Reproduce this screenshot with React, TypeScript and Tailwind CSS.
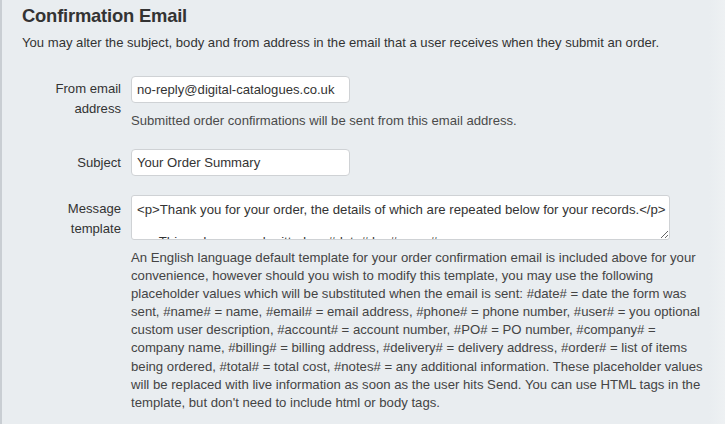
export default function App() {
  return (
    <div
      className="flex h-[424px] w-[725px] overflow-hidden bg-[#e9edf0] text-[#333]"
      style={{ fontFamily: '"Liberation Sans", Arial, sans-serif' }}
    >
      <div className="w-[2px] shrink-0 bg-[#c9ced3]" />
      <div className="flex-1 pt-[4px]">
        <div className="pl-[20px]">
          <h2 className="text-[18.4px] font-bold leading-[24px] tracking-[-0.2px] text-[#333]">
            Confirmation Email
          </h2>
          <p className="mt-[5px] text-[13.1px] leading-[20px]">
            You may alter the subject, body and from address in the email that a user receives when they submit an order.
          </p>
        </div>

        <div className="mt-[23px] flex flex-col">
          {/* from address */}
          <div className="flex gap-[10px]">
            <label className="w-[119px] shrink-0 pl-[46px] pt-[3px] text-right text-[13.1px] leading-[20px]">
              From email address
            </label>
            <div className="flex flex-col">
              <div className="flex h-[27px] w-[219px] items-center rounded-[4px] border border-[#cfd2d5] bg-white px-[5px] text-[13.1px]">
                no-reply@digital-catalogues.co.uk
              </div>
              <p className="mt-[8px] text-[13.1px] leading-[20px] text-[#4a4a4a]">
                Submitted order confirmations will be sent from this email address.
              </p>
            </div>
          </div>

          {/* subject */}
          <div className="mt-[18px] flex items-center gap-[10px]">
            <label className="w-[119px] shrink-0 text-right text-[13.1px] leading-[20px]">Subject</label>
            <div className="flex h-[27px] w-[219px] items-center rounded-[4px] border border-[#cfd2d5] bg-white px-[5px] text-[13.1px]">
              Your Order Summary
            </div>
          </div>

          {/* template */}
          <div className="mt-[19px] flex gap-[10px]">
            <label className="w-[119px] shrink-0 pl-[46px] pt-[4px] text-right text-[13.1px] leading-[20px]">
              Message template
            </label>
            <div className="flex w-[574px] flex-col">
              <textarea
                readOnly
                wrap="off"
                className="h-[45px] w-[539px] resize-y overflow-hidden rounded-[3px] border border-[#cfd2d5] bg-white px-[5px] pt-[6px] text-[13.2px] leading-[16px] text-[#333] outline-none"
                value={
                  '<p>Thank you for your order, the details of which are repeated below for your records.</p>\n\n      This order was submitted on #date# by #name#'
                }
              />
              <p className="mt-[9px] text-[13.16px] leading-[18.1px] text-[#444]">
                An English language default template for your order confirmation email is included above for your
                convenience, however should you wish to modify this template, you may use the following placeholder
                values which will be substituted when the email is sent: #date# = date the form was sent, #name# =
                name, #email# = email address, #phone# = phone number, #user# = you optional custom user description,
                #account# = account number, #PO# = PO number, #company# = company name, #billing# = billing address,
                #delivery# = delivery address, #order# = list of items being ordered, #total# = total cost, #notes# =
                any additional information. These placeholder values will be replaced with live information as soon
                as the user hits Send. You can use HTML tags in the template, but don't need to include html or body
                tags.
              </p>
            </div>
          </div>
        </div>
      </div>
      <div className="w-[16px] shrink-0 bg-gradient-to-r from-[#e9edf0] to-[#eef1f3]" />
    </div>
  )
}
